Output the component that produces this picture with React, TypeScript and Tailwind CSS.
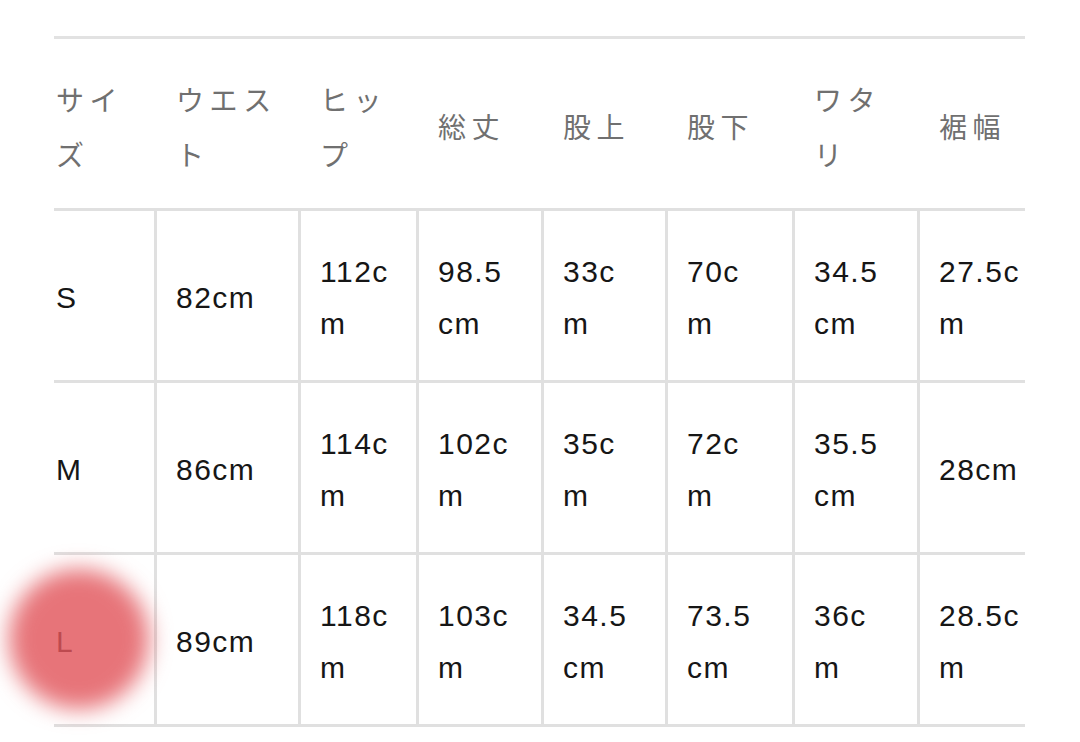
import React from "react";

const header: string[][] = [
  ["サイ", "ズ"],
  ["ウエス", "ト"],
  ["ヒッ", "プ"],
  ["総丈"],
  ["股上"],
  ["股下"],
  ["ワタ", "リ"],
  ["裾幅"],
];

const rows: string[][][] = [
  [["S"], ["82cm"], ["112c", "m"], ["98.5", "cm"], ["33c", "m"], ["70c", "m"], ["34.5", "cm"], ["27.5c", "m"]],
  [["M"], ["86cm"], ["114c", "m"], ["102c", "m"], ["35c", "m"], ["72c", "m"], ["35.5", "cm"], ["28cm"]],
  [["L"], ["89cm"], ["118c", "m"], ["103c", "m"], ["34.5", "cm"], ["73.5", "cm"], ["36c", "m"], ["28.5c", "m"]],
];

const grid = "grid grid-cols-[100px_144px_118px_125px_124px_127px_125px_108px]";

export default function App() {
  return (
    <div className="relative w-[1080px] h-[742px] overflow-hidden bg-white pt-[36px] pl-[54px]">
      <div className="w-[971px] border-t-[3px] border-[#e2e2e2]">
        <div className={`${grid} h-[172px] border-b-[3px] border-[#e0e0e0]`}>
          {header.map((lines, i) => (
            <div
              key={i}
              className={`flex flex-col justify-center pt-[6px] text-[28px] leading-[55px] tracking-[0.2em] text-[#707070] ${
                i === 0 ? "pl-[2px]" : "pl-[22px]"
              }`}
              style={{ fontFamily: '"Noto Sans CJK JP", "Noto Sans", sans-serif' }}
            >
              {lines.map((l, j) => (
                <span key={j} className="whitespace-nowrap">
                  {l}
                </span>
              ))}
            </div>
          ))}
        </div>
        {rows.map((row, r) => (
          <div key={r} className={`${grid} h-[172px] border-b-[3px] border-[#e0e0e0]`}>
            {row.map((lines, i) => (
              <div
                key={i}
                className={`flex flex-col justify-center pt-[4px] text-[30px] leading-[52px] tracking-[1.5px] text-[#161616] ${
                  i === 0 ? "pl-[2px]" : "border-l-[3px] border-[#e0e0e0] pl-[19px]"
                }`}
                style={{ fontFamily: '"Liberation Sans", Arial, sans-serif' }}
              >
                {lines.map((l, j) => (
                  <span key={j} className="whitespace-nowrap">
                    {l}
                  </span>
                ))}
              </div>
            ))}
          </div>
        ))}
      </div>
      <div className="pointer-events-none absolute left-[9px] top-[569px] h-[140px] w-[140px] rounded-full bg-[rgba(226,86,92,0.82)] blur-[11px]" />
    </div>
  );
}
